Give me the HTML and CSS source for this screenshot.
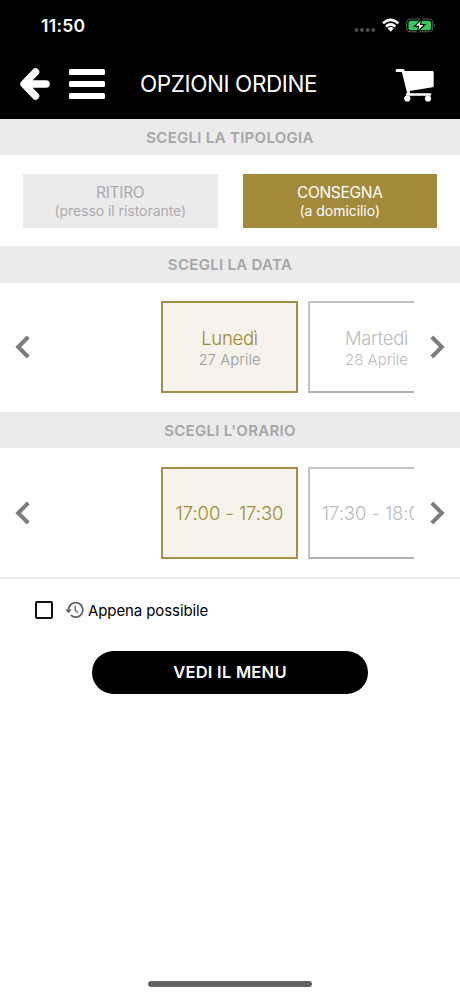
FILE: index.html
```html
<!DOCTYPE html>
<html lang="it">
<head>
<meta charset="utf-8">
<title>Opzioni ordine</title>
<link rel="stylesheet" href="styles.css">
</head>
<body>
<header class="header">
  <div class="status">
    <span class="time">11:50</span>
    <svg class="status-icons" width="84" height="20" viewBox="0 0 84 20">
      <g fill="#4b4b4b"><circle cx="4.5" cy="15" r="2"/><circle cx="10" cy="15" r="2"/><circle cx="15.7" cy="15" r="2"/><circle cx="21.3" cy="15" r="2"/></g>
      <g fill="none" stroke="#fff" stroke-width="2.6"><path d="M31 8.300Q38.600 1.500 46.300 8.300"/><path d="M34 11.500Q38.600 7.400 43.300 11.500"/></g>
      <path d="M36 13.200Q38.600 11.200 41.300 13.200L38.700 16.300Z" fill="#fff" stroke="#fff" stroke-width=".8" stroke-linejoin="round"/>
      <rect x="54.700" y="4" width="26" height="12.800" rx="3.800" fill="none" stroke="#595959" stroke-width="1.100"/>
      <rect x="56.500" y="5.700" width="22.500" height="9.500" rx="2" fill="#34c759"/>
      <path d="M82.200 8.400Q84.200 10.400 82.200 12.500Z" fill="#595959"/>
      <path d="M70 3.800L62.600 11.300H66.600L65.200 17.300L72.800 9.500H68.500Z" fill="#fff" stroke="#000" stroke-width="1.200"/>
    </svg>
  </div>
  <div class="nav">
    <svg class="back" width="32" height="34" viewBox="0 0 32 34"><path d="M17.500 5L6 17L17.500 29M7 17H28" fill="none" stroke="#fff" stroke-width="7.500" stroke-linecap="round" stroke-linejoin="round"/></svg>
    <div class="burger"><i></i><i></i><i></i></div>
    <h1 class="title">OPZIONI ORDINE</h1>
    <svg class="cart" width="42" height="36" viewBox="0 0 42 36"><g fill="none" stroke="#fff" stroke-width="3" stroke-linecap="round" stroke-linejoin="round"><path d="M3 3.500H9L14.500 25.500"/><path d="M13 27.500H36" stroke-width="2.500"/></g><path d="M10 4H38.500Q39.700 4 39.700 5.200V19Q39.700 20 38.600 20.200L14 24.300Z" fill="#fff"/><circle cx="13.300" cy="31.500" r="3.100" fill="#fff"/><circle cx="34" cy="31.500" r="3.100" fill="#fff"/></svg>
  </div>
</header>
<main>
  <h2 class="bar">SCEGLI LA TIPOLOGIA</h2>
  <section class="types">
    <div class="type"><span class="type-name">RITIRO</span><span class="type-note">(presso il ristorante)</span></div>
    <div class="type chosen"><span class="type-name">CONSEGNA</span><span class="type-note">(a domicilio)</span></div>
  </section>
  <h2 class="bar">SCEGLI LA DATA</h2>
  <section class="picker">
    <svg class="chevron" width="16" height="24" viewBox="0 0 16 24"><path d="M13.200 2L3.200 12L13.200 22" fill="none" stroke="#7d7d7d" stroke-width="4"/></svg>
    <div class="track">
      <div class="card active"><span class="day">Lunedì</span><span class="date">27 Aprile</span></div>
      <div class="card"><span class="day">Martedì</span><span class="date">28 Aprile</span></div>
    </div>
    <svg class="chevron" width="16" height="24" viewBox="0 0 16 24"><path d="M2.800 2L12.800 12L2.800 22" fill="none" stroke="#7d7d7d" stroke-width="4"/></svg>
  </section>
  <h2 class="bar">SCEGLI L'ORARIO</h2>
  <section class="picker">
    <svg class="chevron" width="16" height="24" viewBox="0 0 16 24"><path d="M13.200 2L3.200 12L13.200 22" fill="none" stroke="#7d7d7d" stroke-width="4"/></svg>
    <div class="track">
      <div class="card active"><span class="slot">17:00 - 17:30</span></div>
      <div class="card"><span class="slot">17:30 - 18:00</span></div>
    </div>
    <svg class="chevron" width="16" height="24" viewBox="0 0 16 24"><path d="M2.800 2L12.800 12L2.800 22" fill="none" stroke="#7d7d7d" stroke-width="4"/></svg>
  </section>
  <div class="asap">
    <span class="checkbox"></span>
    <svg class="history" width="20" height="18" viewBox="0 0 20 18"><g fill="none" stroke="#666"><path d="M3.500 9A7.200 7.200 0 1 1 5.800 14.200" stroke-width="1.800"/><path d="M10.200 4.800V9.300L13 11.800" stroke-width="1.400"/></g><path d="M.3 8.500H6.800L3.500 12.200Z" fill="#666"/></svg>
    <span class="asap-text">Appena possibile</span>
  </div>
  <button class="menu">VEDI IL MENU</button>
</main>
<div class="home"></div>
</body>
</html>
```
FILE: styles.css
```css
* { box-sizing: border-box; }
body {
  margin: 0;
  height: 996px;
  display: flex;
  flex-direction: column;
  background: #fff;
  font-family: Inter, "Liberation Sans", sans-serif;
  overflow: hidden;
}
svg { display: block; flex: none; }
span { white-space: nowrap; }
.header { height: 118.600px; background: #000; color: #fff; }
.status { display: flex; justify-content: space-between; padding: 15px 24px 0 41px; height: 50px; }
.time { font-size: 17.500px; font-weight: 600; line-height: 21px; letter-spacing: 0.300px; }
.nav { display: flex; align-items: center; height: 68px; padding-left: 18px; }
.burger { display: flex; flex-direction: column; gap: 6px; margin-left: 19px; width: 36px; }
.burger i { height: 6px; border-radius: 1.500px; background: #fff; }
.title { margin: 0 0 0 35px; width: 178px; font-size: 22.500px; font-weight: 400; line-height: 28px; letter-spacing: -0.400px; white-space: nowrap; }
.cart { margin-left: 76px; margin-top: 2px; }
.bar {
  margin: 0;
  height: 36.700px;
  background: #ebebeb;
  color: #a5a5aa;
  font-size: 15px;
  font-weight: 600;
  line-height: 37px;
  letter-spacing: 0.300px;
  text-align: center;
}
.types { display: flex; gap: 25px; padding: 19px 23px 18px; height: 91px; }
.type {
  flex: 1;
  display: flex;
  flex-direction: column;
  align-items: center;
  justify-content: center;
  background: #ebebeb;
  color: #aaaaae;
}
.type-name { font-size: 15.500px; line-height: 18px; letter-spacing: -0.300px; margin-top: 1px; }
.type-note { font-size: 14px; line-height: 18px; letter-spacing: -0.050px; }
.chosen { background: #a38b3b; color: #fff; }
.picker { display: flex; align-items: center; height: 128.700px; padding: 0 15px; }
.track { display: flex; gap: 10px; width: 253px; margin: 0 15px 0 130px; overflow: hidden; }
.card {
  flex: none;
  display: flex;
  flex-direction: column;
  align-items: center;
  justify-content: center;
  width: 137px;
  height: 92px;
  padding-top: 1px;
  border: 2px solid #c3c3c3;
  border-bottom-color: #b2b2b2;
  color: #bbbbbe;
}
.active { border-color: #a38f43; background: #f6f3ec; color: #a0892f; }
.day, .slot { font-size: 18.500px; font-weight: 300; line-height: 24px; letter-spacing: -0.070px; }
.day { letter-spacing: -0.300px; }
.date { font-size: 15px; font-weight: 300; line-height: 20px; }
.active .date { color: #999; }
.asap { display: flex; align-items: center; height: 64px; padding-left: 35px; border-top: 2px solid #ebebeb; }
.checkbox { width: 18px; height: 18px; border: 2px solid #111; border-radius: 2px; }
.history { margin: 0 3px 0 12px; }
.asap-text { font-size: 15px; letter-spacing: -0.100px; }
.menu {
  display: block;
  width: 276px;
  height: 43px;
  margin: 9.500px auto 0;
  padding: 0;
  border: 0;
  border-radius: 22px;
  background: #000;
  color: #fff;
  font: 600 16.500px/43px Inter, sans-serif;
  letter-spacing: 0.250px;
}
.home { width: 164px; height: 6px; margin: auto auto 9px; border-radius: 3px; background: #646464; }
```
